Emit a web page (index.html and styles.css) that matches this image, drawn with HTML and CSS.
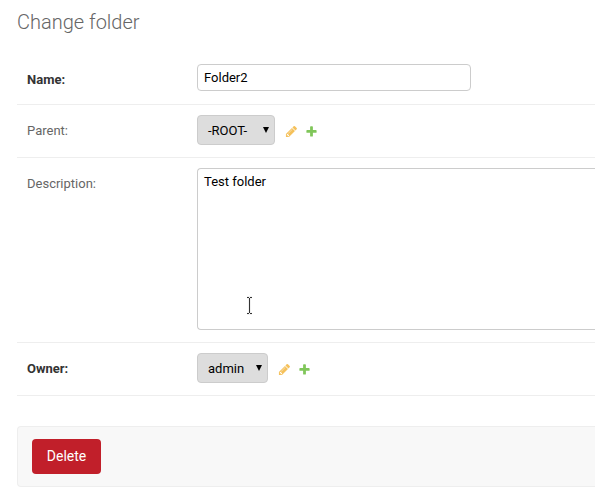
FILE: index.html
```html
<!DOCTYPE html>
<html lang="en">
<head>
<meta charset="utf-8">
<title>Change folder</title>
<link rel="stylesheet" href="styles.css">
</head>
<body>
<svg class="defs" aria-hidden="true">
  <symbol id="pencil" viewBox="0 0 1792 1792"><path d="M491 1536l91-91-235-235-91 91v107h128v128h107zm523-928q0-22-22-22-10 0-17 7l-542 542q-7 7-7 17 0 22 22 22 10 0 17-7l542-542q7-7 7-17zm-54-192l416 416-832 832h-416v-416zm683 96q0 53-37 90l-166 166-416-416 166-165q36-38 90-38 53 0 91 38l235 234q37 39 37 91z"/></symbol>
  <symbol id="plus" viewBox="0 0 1792 1792"><path d="M1600 796v192q0 40-28 68t-68 28h-416v416q0 40-28 68t-68 28h-192q-40 0-68-28t-28-68v-416h-416q-40 0-68-28t-28-68v-192q0-40 28-68t68-28h416v-416q0-40 28-68t68-28h192q40 0 68 28t28 68v416h416q40 0 68 28t28 68z"/></symbol>
</svg>
<main>
  <h1>Change folder</h1>
  <form>
    <div class="row row-name">
      <label class="required">Name:</label>
      <div class="input">Folder2</div>
    </div>
    <div class="row">
      <label>Parent:</label>
      <div class="select select-parent"><span>-ROOT-</span><i class="arrow"></i></div>
      <svg class="icon edit"><use href="#pencil"/></svg>
      <svg class="icon add"><use href="#plus"/></svg>
    </div>
    <div class="row row-description">
      <label>Description:</label>
      <div class="textarea">Test folder
        <svg class="cursor" viewBox="0 0 9 19"><path class="halo" d="M2 1.500h5M4.500 2v15M2 17.500h5"/><path class="beam" d="M2 1.500h2M5 1.500h2M4.500 2v15M2 17.500h2M5 17.500h2"/></svg>
      </div>
    </div>
    <div class="row">
      <label class="required">Owner:</label>
      <div class="select select-owner"><span>admin</span><i class="arrow"></i></div>
      <svg class="icon edit"><use href="#pencil"/></svg>
      <svg class="icon add"><use href="#plus"/></svg>
    </div>
    <div class="submit-row"><button type="button">Delete</button></div>
  </form>
</main>
</body>
</html>
```
FILE: styles.css
```css
* { box-sizing: border-box; }
body {
  margin: 0;
  background: #fff;
  color: #000;
  font: 13px/15px Roboto, "Liberation Sans", sans-serif;
}
.defs { display: none; }
main { padding: 10px 0 0 17px; }
h1 {
  margin: 0;
  height: 44px;
  color: #666;
  font-size: 20px;
  font-weight: 300;
  line-height: 24px;
}
.row {
  display: flex;
  align-items: flex-start;
  height: 53px;
  padding: 10px 0 0 10px;
  border-bottom: 1px solid #eee;
}
.row-name { height: 51px; }
.row-description { height: 185px; }
label {
  flex: none;
  width: 170px;
  padding-top: 8px;
  color: #666;
}
label.required { color: #333; font-weight: 700; }
.input, .textarea {
  border: 1px solid #ccc;
  border-radius: 4px;
  padding: 5px 6px;
  background: #fff;
}
.input { width: 274px; height: 27px; }
.textarea {
  position: relative;
  flex: 1;
  height: 162px;
  border-right: 0;
  border-radius: 4px 0 0 4px;
}
.select {
  display: flex;
  align-items: center;
  justify-content: space-between;
  height: 30px;
  padding: 0 5px 0 10px;
  border: 1px solid #ccc;
  border-radius: 4px;
  background: #ddd;
}
.select-parent { width: 78px; }
.select-owner { width: 71px; }
.arrow {
  border: solid transparent;
  border-width: 6px 3.5px 0;
  border-top-color: #000;
}
.icon { width: 13px; height: 13px; margin-top: 10px; }
.edit { margin-left: 10px; fill: #f5c15b; }
.add { margin-left: 7px; fill: #80c65a; }
.cursor {
  position: absolute;
  left: 47px;
  top: 127px;
  width: 9px;
  height: 19px;
  fill: none;
  overflow: visible;
}
.halo { stroke: #f2f2f2; stroke-width: 3; }
.beam { stroke: #333; stroke-width: 1; }
.submit-row {
  height: 61px;
  margin-top: 30px;
  padding: 12px 14px;
  border: 1px solid #eee;
  border-right: 0;
  border-radius: 4px 0 0 4px;
  background: #f8f8f8;
}
button {
  display: block;
  width: 69px;
  height: 35px;
  padding: 0;
  border: 0;
  border-radius: 4px;
  background: #c11f2a;
  color: #fff;
  font: 14px/35px Roboto, "Liberation Sans", sans-serif;
}
```
